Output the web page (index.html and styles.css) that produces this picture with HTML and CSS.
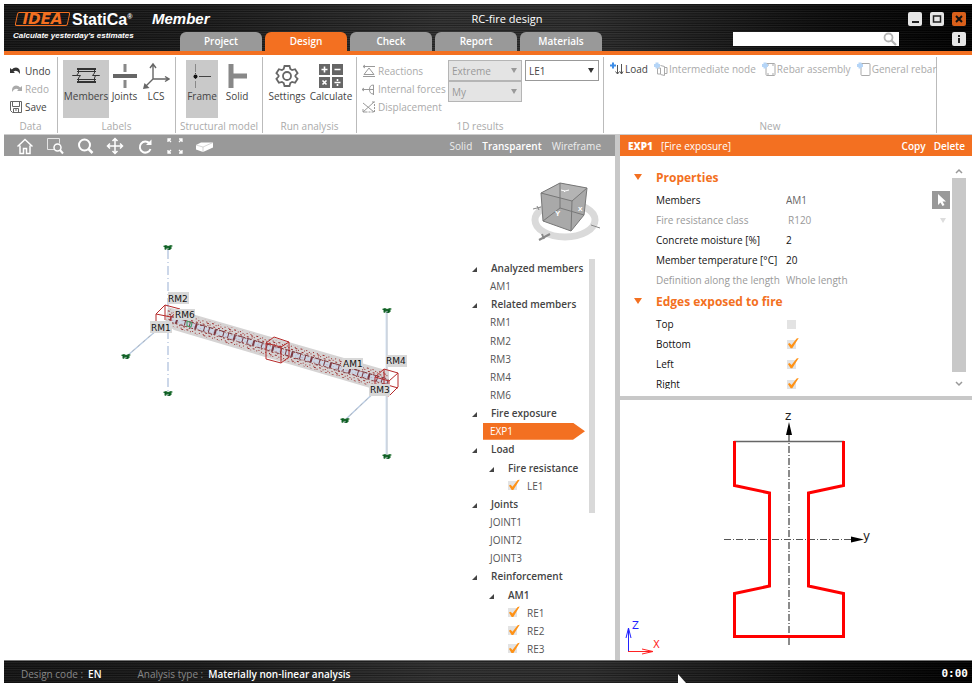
FILE: index.html
```html
<!DOCTYPE html>
<html lang="en">
<head>
	<meta charset="UTF-8">
	<meta name="viewport" content="width=device-width, initial-scale=1.0">
	<title>RC-fire design</title>
	<link rel="stylesheet" href="styles.css">
</head>
<body>
	<header class="titlebar metal">
		<div class="brand">
			<div class="brand-row">
				<span class="logo">IDEA</span>
				<span class="name">StatiCa<sup>®</sup></span>
				<span class="product">Member</span>
			</div>
			<div class="tagline">Calculate yesterday's estimates</div>
		</div>
		<div class="titlebar-main">
			<div class="titlebar-top">
				<h1>RC-fire design</h1>
				<div class="win-btns">
					<button class="win-btn" aria-label="Minimize"><svg width="14" height="14"><path d="M4 10h7" stroke="#222" stroke-width="2"/></svg></button>
					<button class="win-btn" aria-label="Maximize"><svg width="14" height="14"><rect x="3.500" y="4" width="7" height="6" fill="none" stroke="#222" stroke-width="1.500"/></svg></button>
					<button class="win-btn close" aria-label="Close"><svg width="14" height="14"><path d="M4 4l6 6M10 4l-6 6" stroke="#111" stroke-width="2"/></svg></button>
				</div>
			</div>
			<div class="titlebar-bottom">
				<nav class="tabs">
					<a href="#">Project</a>
					<a href="#" class="active">Design</a>
					<a href="#">Check</a>
					<a href="#">Report</a>
					<a href="#">Materials</a>
				</nav>
				<div class="search">
					<input type="text" aria-label="Search">
					<svg width="16" height="14"><circle cx="5.500" cy="5.500" r="4" fill="none" stroke="#b5b5b5" stroke-width="1.800"/><path d="M8.500 8.500l4.500 4.500" stroke="#b5b5b5" stroke-width="2.200"/></svg>
				</div>
				<button class="win-btn" aria-label="Info"><svg width="14" height="14"><path d="M7 3v2M7 6v5" stroke="#222" stroke-width="2"/></svg></button>
			</div>
		</div>
	</header>

	<div class="ribbon">
		<section class="group g-data">
			<div class="items stack">
				<button class="small"><svg width="14" height="14"><path d="M1 4v5h5L4.500 7.500Q8 5 11 10Q11.500 3.500 7 3.500Q4.500 3.500 2.800 5.500z" fill="#333"/></svg>Undo</button>
				<button class="small" disabled><svg width="14" height="14"><path d="M13 4v5h-5L9.500 7.500Q6 5 3 10Q2.500 3.500 7 3.500Q9.500 3.500 11.200 5.500z" fill="#aaa"/></svg>Redo</button>
				<button class="small"><svg width="14" height="14" fill="none" stroke="#666"><path d="M1.500 1.500h11v11h-9l-2-2zM3.500 1.500v5h7v-5M4.500 12.500v-4h5v4M6 10h2"/></svg>Save</button>
			</div>
			<h2>Data</h2>
		</section>
		<section class="group g-labels">
			<div class="items">
				<button class="big on w46"><svg width="28" height="28" fill="none" stroke="#333"><path d="M5 7h19M5 20h19" stroke-width="2"/><path d="M5 9.500h19M5 17.500h19M6.500 6v5l-2 2.500h-4h4l4 0l-2 2.500v5M22.500 6v5l-2 2.500h7h-4l-1 2.500v5"/></svg>Members</button>
				<button class="big w30"><svg width="28" height="28"><path d="M14 2v8M14 18v8" stroke="#888" stroke-width="3"/><path d="M2 14h24" stroke="#666" stroke-width="4"/></svg>Joints</button>
				<button class="big w32"><svg width="28" height="28" fill="none" stroke="#666" stroke-width="1.400"><path d="M11 3v14h15M11 17l-8 8M8 6l3-4l3 4M23 14.500l4 2.500l-4 2.500"/><path d="M1 27l1.500-6l5 5z" fill="#666" stroke="none"/></svg>LCS</button>
			</div>
			<h2>Labels</h2>
		</section>
		<section class="group g-model">
			<div class="items">
				<button class="big on w32"><svg width="28" height="28"><path d="M7.500 2v8M7.500 19v7" stroke="#888"/><path d="M7.500 11v1M7.500 16v1M11 14.500h12" stroke="#444"/><circle cx="7.500" cy="14.500" r="2" fill="#111"/></svg>Frame</button>
				<button class="big w36"><svg width="28" height="28"><path d="M8 2v24M10 14h14" stroke="#888" stroke-width="5"/></svg>Solid</button>
			</div>
			<h2>Structural model</h2>
		</section>
		<section class="group g-run">
			<div class="items">
				<button class="big w46"><svg width="28" height="28" fill="none" stroke="#666" stroke-width="1.800"><path d="M11.500 4h5l.8 3 1.800 1 3-.8 2.500 4-2.200 2.300v1l2.200 2.300-2.500 4-3-.8-1.800 1-.8 3h-5l-.8-3-1.800-1-3 .8-2.500-4 2.200-2.300v-1l-2.200-2.300 2.500-4 3 .8 1.800-1z"/><circle cx="14" cy="14" r="4"/></svg>Settings</button>
				<button class="big w42"><svg width="28" height="28"><path d="M2 2h11v11H2zM15 2h11v11H15zM2 15h11v11H2zM15 15h11v11H15z" fill="#666"/><path d="M4.500 7.500h6M7.500 4.500v6M17.500 7.500h6M5.500 18.500l4 4M9.500 18.500l-4 4M17.500 20.500h6M20.500 17v2M20.500 22v2" stroke="#fff" stroke-width="1.600"/></svg>Calculate</button>
			</div>
			<h2>Run analysis</h2>
		</section>
		<section class="group g-results">
			<div class="items">
				<div class="stack results">
					<button class="small" disabled><svg width="14" height="14" fill="none" stroke="#999"><path d="M1 2.500h12M3 1l-2 1.500l2 1.500M7 4l5 6.500H2zM1 12.500h12"/></svg>Reactions</button>
					<button class="small" disabled><svg width="14" height="14" fill="none" stroke="#999"><path d="M0 7.500h7M2 6l-2 1.500l2 1.500M11.500 3v10M11.500 3q-4 0-4 4.500t4 4.500M7 7.500h4"/></svg>Internal forces</button>
					<button class="small" disabled><svg width="14" height="14" fill="none" stroke="#999"><path d="M1 3l11 9M1 12l11-10M1 9v3h3M10 2h3"/><path d="M12.500 4v8H4" stroke-dasharray="2 1"/></svg>Displacement</button>
				</div>
				<div class="selects">
					<div class="pick off"><select aria-label="Extreme" disabled><option>Extreme</option></select></div>
					<div class="pick off"><select aria-label="Force" disabled><option>My</option></select></div>
				</div>
				<div class="pick"><select aria-label="Load"><option>LE1</option></select></div>
			</div>
			<h2>1D results</h2>
		</section>
		<section class="group g-new">
			<div class="items">
				<button class="small"><svg width="14" height="14" fill="none"><path d="M7.500 3v9M5.500 9.500l2 2.500l2-2.500M11.500 2v10M10 9.500l1.500 2.500l1.500-2.500" stroke="#555"/><path d="M0 3.500h6M3 .5v6" stroke="#3d8ee8" stroke-width="2"/></svg>Load</button>
				<button class="small" disabled><svg width="14" height="14" fill="none"><path d="M3.500 6v6h3v-6zM6.500 3.500l4 1v9l-4-1M10.500 5.500h2.500v6h-2.500" stroke="#aaa"/><path d="M0 3.500h6M3 .5v6" stroke="#b5d5f7" stroke-width="3"/></svg>Intermediate node</button>
				<button class="small" disabled><svg width="14" height="14" fill="none"><rect x="4" y="1.500" width="9" height="12" rx="1" stroke="#aaa"/><path d="M5 3h2M10 3h2M5 12h2M10 12h2" stroke="#aaa"/><path d="M0 3.500h6M3 .5v6" stroke="#b5d5f7" stroke-width="3"/></svg>Rebar assembly</button>
				<button class="small" disabled><svg width="14" height="14" fill="none"><rect x="4" y="1.500" width="9" height="12" rx="1" stroke="#aaa"/><path d="M0 3.500h6M3 .5v6" stroke="#b5d5f7" stroke-width="3"/></svg>General rebar</button>
			</div>
			<h2>New</h2>
		</section>
	</div>

	<main class="work">
		<section class="viewport">
			<div class="toolbar">
				<button class="tool" aria-label="Home"><svg width="18" height="18" fill="none" stroke="#fff" stroke-width="1.500"><path d="M1.500 9.500L9 2.500l7.500 7M4 8.500v8h3.500v-5h3v5H14V8.500"/></svg></button>
				<button class="tool" aria-label="Zoom window"><svg width="18" height="18" fill="none" stroke="#fff"><path d="M8 12.500H1.500V1.500h12v5" stroke="#e4e4e4"/><circle cx="11.500" cy="10.500" r="3.500" stroke-width="1.500"/><path d="M14 13l3 3.500" stroke-width="2"/></svg></button>
				<button class="tool" aria-label="Zoom"><svg width="18" height="18" fill="none" stroke="#fff"><circle cx="8.500" cy="8" r="5.500" stroke-width="2"/><path d="M12.500 12l4 4" stroke-width="2.500"/></svg></button>
				<button class="tool" aria-label="Pan"><svg width="18" height="18" fill="none" stroke="#fff" stroke-width="1.500"><path d="M9 1.500v15M1.500 9h15M6.500 4L9 1.500L11.500 4M6.500 14L9 16.500l2.500-2.500M4 6.500L1.500 9L4 11.500M14 6.500L16.500 9L14 11.500"/></svg></button>
				<button class="tool" aria-label="Rotate"><svg width="18" height="18" fill="none" stroke="#fff" stroke-width="2"><path d="M13.500 6.500A5.500 5.500 0 1 0 14.500 12"/><path d="M10 8h5.500V2.500z" fill="#fff" stroke="none"/></svg></button>
				<button class="tool" aria-label="Fit"><svg width="18" height="18" fill="none" stroke="#fff" stroke-width="1.300"><path d="M2 5V2h3M2 2l3 3M13 2h3v3M16 2l-3 3M2 13v3h3M2 16l3-3M16 13v3h-3M16 16l-3-3"/></svg></button>
				<button class="tool" aria-label="View"><svg width="18" height="18"><path d="M0 8l5-2.500l12 0v5L7 15L0 12.500z" fill="#fff"/><path d="M0 8l7 2l10-4.500M7 10v5" fill="none" stroke="#bbb" stroke-width=".6"/></svg></button>
				<div class="modes">
					<button>Solid</button>
					<button class="on">Transparent</button>
					<button>Wireframe</button>
				</div>
			</div>
			<div class="scene">
				<svg class="model" viewBox="4 156 460 504" role="img" aria-label="Structural model">
					<defs>
						<g id="support"><path d="M-5-1l3-1 2 1 3-1 2 1-2 1 1 1-2 2h-2l1-2-2 0-1 2-2-1 1-1z" fill="#17682a"/><path d="M-3 0h1M1 1h1M-1 2h2" stroke="#042" fill="none"/></g>
						<!-- reinforcement seen through the concrete -->
						<pattern id="rebar" width="23" height="13" patternUnits="userSpaceOnUse" patternTransform="rotate(16)">
							<path d="M0 .5h2M4 1.500h1M7 .5h1M10 1.500h2M14 .5h1M17 1.500h1M20 .5h2M2 3.500h1M5 2.500h2M9 3.500h1M13 3.500h2M16 2.500h1M19 3.500h1M22 2.500h1M0 5.500h1M3 6.500h1M7 5.500h1M11 5.500h1M12 6.500h2M17 5.500h2M21 6.500h1M1 8.500h2M5 7.500h1M8 8.500h2M13 8.500h1M15 7.500h1M19 8.500h2M0 10.500h1M3 11.500h1M6 10.500h2M10 11.500h1M12 10.500h1M15 11.500h2M18 10.500h1M21 11.500h1" stroke="#9b2c2c"/>
						</pattern>
					</defs>
					<g fill="none">
						<path d="M168 250v142" stroke="#cfe0f5" stroke-width="2" stroke-dasharray="9 3 1 3"/>
						<path d="M168 250v142" stroke="#c6c6d4" stroke-width=".7" stroke-dasharray="9 3 1 3"/>
						<path d="M386.500 312v143" stroke="#d3e2f3" stroke-width="2"/>
						<path d="M387 312v143" stroke="#c4c8ce"/>
						<path d="M127 356l38-33M345 420l36-34" stroke="#b9cbe2" stroke-width="1.400"/>
						<path d="M127 356l38-33M345 420l36-34" stroke="#aaa" stroke-width=".7" stroke-dasharray="3 4"/>
					</g>
					<path d="M168 307l24 7L389 371v20l-12-1L174 330l-9-7z" fill="#d6d4d4"/>
					<path d="M168 309l24 7L388 373v16l-11-1L175 328l-9-6z" fill="url(#rebar)"/>
					<path d="M170 319L388 382" fill="none" stroke="#c9d6e8" stroke-width="4" opacity=".8"/>
					<g fill="none" stroke="#7c3a42">
						<path d="M170 316L388 379" stroke-dasharray="5 2 3 1 7 2"/>
						<path d="M170 319L388 382" stroke-width="5" stroke-dasharray="1 5 2 7 1 4"/>
						<path d="M170 322L388 385" stroke-dasharray="4 1 2 3" opacity=".8"/>
					</g>
					<path d="M187 321l5 2-1 4-4-1z" fill="none" stroke="#3d9a60"/>
					<g fill="none" stroke="#b52a2a">
						<path d="M156 314l15 3v14l-15-3zM156 314l9-9 15 4M171 317l9-8M165 305v15"/>
						<path d="M266 343l15 4v16l-15-4zM266 343l8-6 15 5v15l-8 6M281 347l8-5"/>
						<path d="M375 377l14 4v15l-14-4zM375 377l9-8 14 4v14l-9 9M389 381l9-8M384 369v15l14 4"/>
					</g>
					<use href="#support" x="168" y="247"/>
					<use href="#support" x="168" y="393"/>
					<use href="#support" x="126" y="356"/>
					<use href="#support" x="387" y="310"/>
					<use href="#support" x="387" y="456"/>
					<use href="#support" x="345" y="420"/>
					<g fill="#d8d8d8">
						<rect x="168" y="292" width="21" height="12"/>
						<rect x="174" y="309" width="21" height="11"/>
						<rect x="150" y="321" width="22" height="12"/>
						<rect x="342" y="358" width="21" height="11"/>
						<rect x="386" y="355" width="21" height="12"/>
						<rect x="369" y="384" width="21" height="12"/>
					</g>
					<g class="pins">
						<text x="168" y="302">RM2</text>
						<text x="175" y="318">RM6</text>
						<text x="151" y="331">RM1</text>
						<text x="343" y="367">AM1</text>
						<text x="386" y="364">RM4</text>
						<text x="370" y="393">RM3</text>
					</g>
				</svg>
				<aside class="side">
					<svg class="cube" width="80" height="66" role="img" aria-label="View cube">
						<ellipse cx="40" cy="42" rx="30" ry="17" fill="none" stroke="#dadada" stroke-width="7"/>
						<path d="M16 15L35 5l27 5-3 27L46 53L18 43z" fill="#a9a9a9"/>
						<path d="M16 15L35 5l27 5L47 23z" fill="#b4b4b4"/>
						<path d="M16 15l31 8 15-13-3 27L46 53L18 43zM47 23l-1 30M16 15L35 5l27 5M35 5v25l24 7M35 30L18 43" fill="none" stroke="#777"/>
						<path d="M36 12l4 1 4-1M40 13l-1 1" fill="none" stroke="#fff"/>
						<path d="M8 31l8-2M12 28l2 4M66 47l9 3" fill="none" stroke="#888"/>
						<path d="M14 62l11-6M17 56l2 5" fill="none" stroke="#888" stroke-width="2"/>
						<text x="30" y="38">Y</text>
						<text x="53" y="33">x</text>
					</svg>
					<div class="tree-wrap">
						<ul class="tree">
							<li class="head">Analyzed members</li>
							<li>AM1</li>
							<li class="head">Related members</li>
							<li>RM1</li>
							<li>RM2</li>
							<li>RM3</li>
							<li>RM4</li>
							<li>RM6</li>
							<li class="head">Fire exposure</li>
							<li class="selected"><span>EXP1</span></li>
							<li class="head">Load</li>
							<li class="head sub">Fire resistance</li>
							<li class="leaf"><label><input type="checkbox" class="check" checked>LE1</label></li>
							<li class="head">Joints</li>
							<li>JOINT1</li>
							<li>JOINT2</li>
							<li>JOINT3</li>
							<li class="head">Reinforcement</li>
							<li class="head sub">AM1</li>
							<li class="leaf"><label><input type="checkbox" class="check" checked>RE1</label></li>
							<li class="leaf"><label><input type="checkbox" class="check" checked>RE2</label></li>
							<li class="leaf"><label><input type="checkbox" class="check" checked>RE3</label></li>
						</ul>
						<div class="tree-scroll"></div>
					</div>
				</aside>
			</div>
		</section>

		<section class="details">
			<div class="details-bar">
				<strong>EXP1</strong>
				<span>[Fire exposure]</span>
				<button class="copy">Copy</button>
				<button>Delete</button>
			</div>
			<div class="props">
				<form class="props-list">
					<h3>Properties</h3>
					<div class="prop"><label for="members">Members</label><input type="text" id="members" class="soft" value="AM1"><button type="button" class="picker" aria-label="Select members"><svg width="18" height="18"><path d="M6 3v11l2.500-2.500L10.500 15l2-1-2-3.500H14z" fill="#fff"/></svg></button></div>
					<div class="prop off"><label for="resistance">Fire resistance class</label><div class="cls"><select id="resistance" disabled><option>R120</option></select></div></div>
					<div class="prop"><label for="moisture">Concrete moisture [%]</label><input type="text" id="moisture" value="2"></div>
					<div class="prop"><label for="temperature">Member temperature [°C]</label><input type="text" id="temperature" value="20"></div>
					<div class="prop off"><label for="definition">Definition along the length</label><input type="text" id="definition" value="Whole length" disabled></div>
					<h3>Edges exposed to fire</h3>
					<div class="prop"><label for="top">Top</label><input type="checkbox" class="check" id="top"></div>
					<div class="prop"><label for="bottom">Bottom</label><input type="checkbox" class="check" id="bottom" checked></div>
					<div class="prop"><label for="left">Left</label><input type="checkbox" class="check" id="left" checked></div>
					<div class="prop"><label for="right">Right</label><input type="checkbox" class="check" id="right" checked></div>
				</form>
				<div class="scrollbar">
					<svg width="10" height="10"><path d="M2 7l3-3 3 3" fill="none" stroke="#999" stroke-width="1.500"/></svg>
					<div class="thumb"></div>
					<svg width="10" height="10"><path d="M2 3l3 3 3-3" fill="none" stroke="#999" stroke-width="1.500"/></svg>
				</div>
			</div>
			<div class="drawing">
				<svg viewBox="620 400 352 260" role="img" aria-label="Cross-section">
					<g fill="none">
						<path d="M789 434V647" stroke="#666" stroke-width="1.500" stroke-dasharray="7 2 1 2"/>
						<path d="M724 539.500H852" stroke="#555" stroke-dasharray="7 2 1 2"/>
						<path d="M734 441.500H844" stroke="#666" stroke-width="1.500"/>
						<path d="M734.500 441v44.500l35 7.500v93l-35 7.500v43h109v-43l-35-7.500v-93l35-7.500V441" stroke="#f00" stroke-width="3"/>
						<path d="M628.500 652v-24M626 638l2.500-10 2.500 10" stroke="#22f"/>
						<path d="M628 651.500h25M642 649l11 2.500-11 2.500" stroke="#f22"/>
					</g>
					<path d="M789 422l3 13h-6zM864 539.500l-13-3v6z" fill="#000"/>
					<text class="axis" x="785" y="420">z</text>
					<text class="axis" x="863" y="540">y</text>
					<text class="axis blue" x="632" y="629">Z</text>
					<text class="axis red" x="653" y="648">X</text>
				</svg>
			</div>
		</section>
	</main>

	<footer class="status metal">
		<span>Design code :</span><b>EN</b>
		<span class="second">Analysis type :</span><b>Materially non-linear analysis</b>
		<time>0:00</time>
		<svg class="cursor" width="12" height="9"><path d="M1 0v9h8z" fill="#fff"/></svg>
	</footer>
</body>
</html>
```
FILE: styles.css
```css
* {
	box-sizing: border-box;
	margin: 0;
	padding: 0;
}
body {
	display: flex;
	flex-direction: column;
	height: 100vh;
	padding: 4px;
	overflow: hidden;
	background-color: #fff;
	color: #444;
	font-family: "Open Sans", "Noto Sans", sans-serif;
	font-size: 10px;
	line-height: 14px;
}
button,
input,
select {
	border: 0;
	background: none;
	color: inherit;
	font: inherit;
	appearance: none;
}
svg {
	display: block;
	flex: none;
}
ul {
	list-style: none;
}
a {
	color: inherit;
	text-decoration: none;
}

/* title bar */
.metal {
	background:
		repeating-linear-gradient(rgba(0, 0, 0, .25) 0 1px, rgba(255, 255, 255, .05) 1px 2px, rgba(0, 0, 0, .1) 2px 3px, rgba(255, 255, 255, .02) 3px 5px, rgba(0, 0, 0, .2) 5px 6px, rgba(255, 255, 255, .04) 6px 7px),
		linear-gradient(90deg, #151515, #1a1a1a 20%, #2e2e2e 45%, #2c2c2c 60%, #0c0c0c 85%, #000);
}
.titlebar {
	display: flex;
	flex: none;
	height: 51px;
	border-bottom: 4px solid #f37021;
	color: #fff;
}
.brand {
	flex: none;
	width: 176px;
	padding: 6px 0 0 9px;
	white-space: nowrap;
}
.brand-row {
	display: flex;
	align-items: center;
	height: 17px;
	font-family: "DejaVu Sans", sans-serif;
	font-weight: bold;
}
.brand-row span {
	flex: none;
}
.logo {
	width: 53px;
	height: 14px;
	margin: 0 3px;
	border: 1px solid #f37021;
	border-radius: 2px;
	transform: skewX(-12deg);
	color: #f37021;
	font-size: 15px;
	line-height: 12px;
	text-align: center;
}
.name {
	width: 80px;
	font-family: "Liberation Sans", sans-serif;
	font-size: 16px;
}
.name sup {
	font-size: 7px;
	vertical-align: 6px;
}
.product {
	font-family: "Liberation Sans", sans-serif;
	font-size: 15px;
	font-style: italic;
}
.tagline {
	height: 16px;
	font: italic bold 8px/18px "Liberation Sans", sans-serif;
}
.titlebar-main {
	display: flex;
	flex: 1;
	flex-direction: column;
}
.titlebar-top {
	display: flex;
	height: 28px;
}
.titlebar-top h1 {
	flex: 1;
	font-size: 11px;
	font-weight: normal;
	line-height: 29px;
	text-align: center;
}
.win-btns {
	display: flex;
	justify-content: flex-end;
	gap: 8px;
	width: 138px;
	padding: 8px 6px 0 0;
}
.win-btn {
	width: 14px;
	height: 14px;
	border-radius: 2px;
	background-color: #e6e6e6;
}
.close {
	background-color: #d9601b;
}
.titlebar-bottom {
	display: flex;
	flex: 1;
	padding-right: 6px;
}
.tabs {
	display: flex;
	gap: 3px;
	margin-right: auto;
}
.tabs a {
	width: 82px;
	border-radius: 6px 6px 0 0;
	background-color: #999;
	font-weight: 600;
	line-height: 19px;
	text-align: center;
}
.tabs .active {
	background-color: #f37021;
}
.search {
	display: flex;
	width: 166px;
	height: 14px;
	margin-right: 53px;
	background-color: #fff;
}
.search input {
	flex: 1;
	min-width: 0;
	color: #333;
}

/* ribbon */
.ribbon {
	display: flex;
	flex: none;
	height: 80px;
	padding: 2px 0 1px;
	border-bottom: 1px solid #ccc;
	white-space: nowrap;
}
.group {
	display: flex;
	flex: none;
	flex-direction: column;
	padding-top: 3px;
	border-right: 1px solid #bbb;
}
.group h2 {
	margin-top: auto;
	color: #aaa;
	font-size: 10px;
	font-weight: normal;
	text-align: center;
}
.group .items {
	display: flex;
}
.group .stack {
	display: flex;
	flex-direction: column;
	padding: 2px 0 0 5px;
}
.g-data {
	width: 54px;
}
.g-labels {
	width: 118px;
}
.g-labels .items {
	padding-left: 5px;
}
.g-model {
	width: 87px;
}
.g-model .items {
	padding-left: 10px;
}
.g-run {
	width: 94px;
}
.g-run .items {
	padding-left: 1px;
}
.g-results {
	width: 247px;
}
.g-new {
	width: 333px;
}
.g-new .items {
	gap: 6px;
	padding: 2px 0 0 6px;
}
.small {
	display: flex;
	align-items: center;
	gap: 2px;
	height: 18px;
}
.small:disabled {
	color: #aaa;
}
.g-new .small {
	gap: 1px;
	height: 14px;
}
.big {
	display: flex;
	flex-direction: column;
	align-items: center;
	height: 58px;
	padding-top: 2px;
	line-height: 12px;
}
.on.big {
	background-color: #c9c9c9;
}
.w30 {
	width: 31px;
}
.w32 {
	width: 32px;
}
.w36 {
	width: 38px;
}
.w42 {
	width: 42px;
}
.w46 {
	width: 46px;
}
.results {
	width: 91px;
}
.pick {
	position: relative;
	width: 74px;
	height: 21px;
	margin-right: 3px;
	border: 1px solid #999;
	background-color: #fff;
}
.pick select {
	width: 100%;
	height: 19px;
	padding-left: 3px;
	opacity: 1;
}
.pick::after,
.cls::after {
	content: "";
	position: absolute;
	top: 7px;
	right: 4px;
	border: 3px solid transparent;
	border-top: 5px solid #333;
	border-bottom: 0;
}
.pick.off {
	border-color: #b5b5b5;
	background-color: #e4e4e4;
	color: #999;
}
.pick.off::after {
	border-top-color: #999;
}

/* work area */
.work {
	display: flex;
	flex: 1;
	min-height: 0;
}
.viewport {
	display: flex;
	flex: 1;
	flex-direction: column;
}
.toolbar {
	display: flex;
	flex: none;
	align-items: center;
	height: 21px;
	padding: 0 14px 0 6px;
	background-color: #999;
	color: #eee;
}
.tool {
	display: flex;
	justify-content: center;
	width: 30px;
}
.modes {
	display: flex;
	gap: 10px;
	margin-left: auto;
}
.modes .on {
	color: #fff;
	font-weight: 600;
}
.scene {
	display: flex;
	flex: 1;
	min-height: 0;
}
.model {
	flex: 1;
	min-width: 0;
	height: 100%;
}
.pins {
	fill: #111;
	font: 9px "DejaVu Sans", sans-serif;
}
.side {
	display: flex;
	flex: none;
	flex-direction: column;
	width: 151px;
	padding: 22px 0 2px;
}
.cube {
	margin: 0 10px 15px auto;
}
.cube text {
	fill: #fff;
	font: bold 8px "Liberation Sans", sans-serif;
}
.tree-wrap {
	display: flex;
	flex: 1;
	min-height: 0;
}
.tree {
	display: grid;
	flex: none;
	grid-auto-rows: 1fr;
	align-items: center;
	width: 125px;
	white-space: nowrap;
}
.tree li {
	padding-left: 26px;
	color: #555;
}
.tree .head {
	padding-left: 8px;
	color: #444;
	font-weight: 600;
}
.tree .head::before {
	content: "";
	display: inline-block;
	margin-right: 14px;
	border-left: 5px solid transparent;
	border-bottom: 5px solid #444;
}
.tree .sub {
	padding-left: 25px;
}
.tree .leaf {
	padding-left: 43px;
}
.tree label {
	display: flex;
	align-items: center;
	gap: 7px;
}
.tree .selected {
	padding-left: 19px;
}
.selected span {
	display: block;
	width: 102px;
	padding-left: 7px;
	background-color: #f37021;
	clip-path: polygon(0 0, 90px 0, 100% 50%, 90px 100%, 0 100%);
	color: #fff;
	line-height: 17px;
}
.tree-scroll {
	width: 6px;
	height: 254px;
	background-color: #d9d9d9;
}
.check {
	width: 13px;
	height: 13px;
	background: linear-gradient(#e3e3e3, #e3e3e3) 1px 2px / 9px 9px no-repeat;
}
.check:checked::after {
	content: "";
	display: block;
	height: 11px;
	background-color: #ff9216;
	clip-path: polygon(15% 58%, 28% 50%, 42% 68%, 82% 8%, 98% 4%, 48% 98%, 36% 98%);
}

/* details */
.details {
	display: flex;
	flex: none;
	flex-direction: column;
	width: 357px;
	border-left: 5px solid #c8c8c8;
}
.details-bar {
	display: flex;
	flex: none;
	align-items: center;
	gap: 8px;
	height: 21px;
	padding: 0 7px 0 8px;
	background-color: #f37021;
	color: #fff;
	font-weight: 600;
}
.details-bar span {
	font-weight: normal;
}
.copy {
	margin-left: auto;
}
.props {
	display: flex;
	flex: none;
	gap: 2px;
	height: 244px;
	padding: 10px 6px 7px 14px;
	border-bottom: 4px solid #c8c8c8;
}
.props-list {
	flex: 1;
	overflow: hidden;
	color: #111;
}
.props h3 {
	height: 24px;
	color: #f37021;
	font-size: 12px;
	font-weight: bold;
	line-height: 23px;
}
.props h3::before {
	content: "";
	display: inline-block;
	margin-right: 14px;
	border: 4px solid transparent;
	border-top: 6px solid #f37021;
	border-bottom: 0;
	vertical-align: 2px;
}
.prop {
	display: flex;
	align-items: center;
	height: 20px;
	padding-left: 22px;
}
.prop label {
	flex: none;
	width: 130px;
}
.prop input[type=text] {
	flex: 1;
	min-width: 0;
}
.prop .soft {
	color: #666;
}
.picker {
	width: 18px;
	height: 18px;
	background-color: #999;
}
.off,
.prop.off input {
	color: #999;
}
.cls {
	position: relative;
	flex: 1;
}
.cls select {
	width: 100%;
	padding-left: 2px;
	opacity: 1;
}
.cls::after {
	top: 5px;
	border-top-color: #ddd;
}
.scrollbar {
	display: flex;
	flex-direction: column;
	align-items: center;
	width: 14px;
}
.thumb {
	flex: 1;
	width: 14px;
	margin: 2px 0 7px;
	background-color: #c8c8c8;
}
.drawing {
	flex: 1;
	min-height: 0;
}
.drawing svg {
	width: 100%;
	height: 100%;
}
.axis {
	font: 12px "DejaVu Sans", sans-serif;
	fill: #222;
}
.axis.blue {
	fill: #22f;
	font-size: 10px;
}
.axis.red {
	fill: #f22;
	font-size: 10px;
}

/* status bar */
.status {
	position: relative;
	display: flex;
	flex: none;
	align-items: center;
	gap: 5px;
	height: 23px;
	padding: 4px 4px 0 17px;
	border-top: 1px solid #777;
	color: #888;
}
.status b {
	color: #fff;
	font-weight: 600;
}
.status .second {
	margin-left: 31px;
}
.status time {
	margin-left: auto;
	color: #fff;
	font: bold 11px/14px "DejaVu Sans Mono", monospace;
}
.cursor {
	position: absolute;
	bottom: 0;
	left: 673px;
}
```
